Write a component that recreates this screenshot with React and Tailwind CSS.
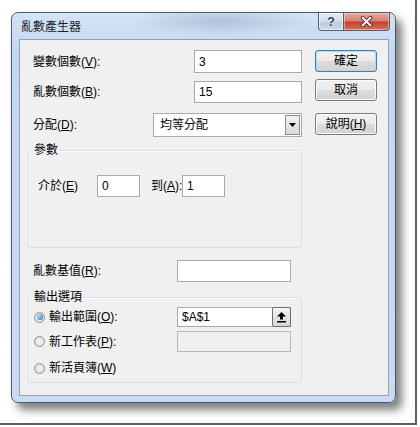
import React from "react";

const FONT = "font-['Liberation_Sans','Noto_Sans_CJK_TC',sans-serif]";

const TextBox = ({ value, className = "", disabled = false }) => (
  <div
    className={`h-full flex items-center pl-[4px] border ${
      disabled ? "border-[#b9b9b9] bg-[#f0f0f0]" : "border-[#a9a9a9] bg-white"
    } ${className}`}
  >
    {value}
  </div>
);

const Btn = ({ children, primary = false, className = "" }) => (
  <div
    className={`w-[62px] h-[22px] rounded-[3px] border flex items-center justify-center leading-none whitespace-nowrap bg-[linear-gradient(180deg,#f2f2f2_0%,#ebebeb_48%,#dddddd_52%,#d2d2d2_100%)] ${
      primary
        ? "border-[#3c7fb1] shadow-[inset_0_0_0_1px_#a9dcf5]"
        : "border-[#7a7a7a] shadow-[inset_0_0_0_1px_#fbfbfb]"
    } ${className}`}
  >
    {children}
  </div>
);

const Radio = ({ checked = false }) => (
  <span className="w-[11px] h-[11px] shrink-0 rounded-full border border-[#8e8f8f] bg-[radial-gradient(circle,#f6f6f6,#d6d6d6)] flex items-center justify-center">
    {checked && (
      <span className="w-[6px] h-[6px] rounded-full bg-[radial-gradient(circle_at_35%_35%,#a6e4fa,#1a6ba8)]" />
    )}
  </span>
);

const Group = ({ title, className = "", children }) => (
  <div className={`relative rounded-[3px] border border-[#d5dfe5] shadow-[inset_1px_1px_0_#ffffff] ${className}`}>
    <span className="absolute left-[4px] -top-[9px] px-[1px] bg-[#f0f0f0] leading-[16px]">{title}</span>
    {children}
  </div>
);

function TitleBar() {
  return (
    <div className="h-[26px] flex items-start">
      <span className="pl-[9px] pt-[6px] leading-[16px] text-[#1e1e1e]">亂數產生器</span>
      <div className="ml-auto mr-[5px] flex">
        <div className="w-[26px] h-[18px] border border-t-0 border-[#4f5f72] rounded-bl-[4px] bg-[linear-gradient(180deg,#e4ecf6_0%,#cfdcec_50%,#b8cbe1_52%,#c9d9ec_100%)] shadow-[inset_0_0_0_1px_rgba(255,255,255,0.6)] flex items-center justify-center">
          <span className="text-[13px] font-bold leading-none text-[#33475c] [text-shadow:0_0_2px_#ffffff]">?</span>
        </div>
        <div className="w-[46px] h-[18px] border border-t-0 border-l-0 border-[#4f5f72] rounded-br-[4px] bg-[linear-gradient(180deg,#e6aba0_0%,#d8806f_45%,#c3412d_55%,#d2735f_100%)] shadow-[inset_0_0_0_1px_rgba(255,220,210,0.5)] flex items-center justify-center">
          <svg width="13" height="11" viewBox="0 0 13 11">
            <path d="M2.5 1.5 L10.5 9.5 M10.5 1.5 L2.5 9.5" stroke="#4a1a14" strokeWidth="3.6" strokeLinecap="round" />
            <path d="M2.5 1.5 L10.5 9.5 M10.5 1.5 L2.5 9.5" stroke="#ffffff" strokeWidth="2" strokeLinecap="round" />
          </svg>
        </div>
      </div>
    </div>
  );
}

function Client() {
  return (
    <div className="mx-[7px] w-[370px] h-[357px] border border-[#8ea3b8] bg-[#f0f0f0] flex whitespace-nowrap">
      {/* 左欄 */}
      <div className="w-[282px] pl-[8px] pt-[10px] flex flex-col">
        <div className="h-[23px] flex items-center">
          <span className="pl-[5px]">變數個數(<u>V</u>):</span>
          <TextBox value="3" className="w-[108px] ml-auto" />
        </div>
        <div className="mt-[8px] h-[22px] flex items-center">
          <span className="pl-[5px]">亂數個數(<u>B</u>):</span>
          <TextBox value="15" className="w-[108px] ml-auto" />
        </div>
        <div className="mt-[10px] h-[24px] flex items-center">
          <span className="pl-[5px]">分配(<u>D</u>):</span>
          <div className="ml-auto w-[149px] h-full border border-[#a9a9a9] bg-white flex items-center">
            <span className="pl-[6px]">均等分配</span>
            <div className="ml-auto mr-[1px] w-[15px] h-[20px] border border-[#8c8c8c] bg-[linear-gradient(180deg,#f2f2f2,#d9d9d9)] flex items-center justify-center">
              <svg width="7" height="4" viewBox="0 0 7 4">
                <polygon points="0,0 7,0 3.5,4" fill="#000" />
              </svg>
            </div>
          </div>
        </div>

        <Group title="參數" className="mt-[13px] h-[98px]">
          <div className="pt-[24px] pl-[9px] h-[46px] flex items-stretch">
            <span className="w-[59px] flex items-center">介於(<u>E</u>)</span>
            <TextBox value="0" className="w-[43px]" />
            <span className="ml-[11px] w-[31px] flex items-center">到(<u>A</u>):</span>
            <TextBox value="1" className="w-[43px]" />
          </div>
        </Group>

        <div className="mt-[12px] h-[22px] flex items-center">
          <span className="pl-[5px] w-[149px]">亂數基值(<u>R</u>):</span>
          <TextBox value="" className="w-[114px]" />
        </div>

        <Group title="輸出選項" className="mt-[15px] h-[86px] pt-[9px]">
          <div className="h-[20px] flex items-center">
            <span className="ml-[5px]"><Radio checked /></span>
            <span className="ml-[4px] w-[128px]">輸出範圍(<u>O</u>):</span>
            <div className="w-[114px] h-full border border-[#a9a9a9] bg-white flex items-center pl-[4px]">
              <span>$A$1</span>
              <div className="ml-auto w-[19px] h-[20px] -mr-px rounded-[2px] border border-[#6e6e6e] bg-[linear-gradient(180deg,#f4f4f4,#d8d8d8)] flex items-center justify-center">
                <svg width="11" height="12" viewBox="0 0 11 12">
                  <path d="M5.5 1 L10 5.5 H7 V8.5 H4 V5.5 H1 Z" fill="#000" />
                  <rect x="1" y="10" width="9" height="1.5" fill="#000" />
                </svg>
              </div>
            </div>
          </div>
          <div className="mt-[4px] h-[21px] flex items-center">
            <span className="ml-[5px]"><Radio /></span>
            <span className="ml-[4px] w-[128px]">新工作表(<u>P</u>):</span>
            <TextBox value="" disabled className="w-[114px]" />
          </div>
          <div className="mt-[6px] h-[20px] flex items-center">
            <span className="ml-[5px]"><Radio /></span>
            <span className="ml-[4px]">新活頁簿(<u>W</u>)</span>
          </div>
        </Group>
      </div>

      {/* 右欄按鈕 */}
      <div className="ml-[13px] pt-[10px] flex flex-col">
        <Btn primary>確定</Btn>
        <Btn className="mt-[7px]">取消</Btn>
        <Btn className="mt-[12px]">說明(<u>H</u>)</Btn>
      </div>
    </div>
  );
}

export default function App() {
  return (
    <div className={`w-[420px] h-[427px] bg-white text-[12px] text-black ${FONT}`}>
      <div className="w-[417px] h-[425px] border-r-2 border-b-2 border-[#5e5e5e] pt-[12px] pl-[11px]">
        <div className="w-[385px] h-[391px] rounded-[7px] border border-[#4a596c] bg-[radial-gradient(ellipse_90px_14px_at_210px_8px,rgba(120,140,165,0.35),transparent),linear-gradient(180deg,#d4e3f5_0%,#c3d7ee_10%,#c9dcf1_100%)] shadow-[6px_7px_9px_rgba(0,0,0,0.5)] flex flex-col">
          <TitleBar />
          <Client />
        </div>
      </div>
    </div>
  );
}
